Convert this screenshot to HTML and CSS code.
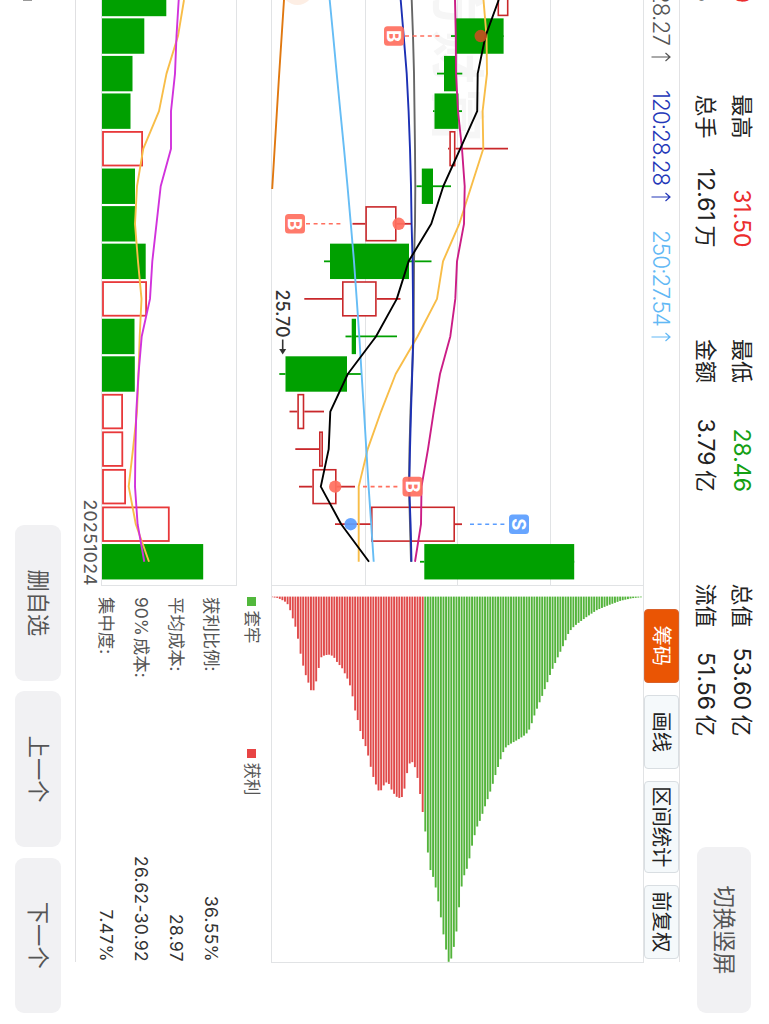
FILE: index.html
```html
<!DOCTYPE html>
<html lang="zh-CN">
<head>
<meta charset="utf-8">
<title>K线</title>
<link rel="stylesheet" href="styles.css">
</head>
<body>
<div class="device">
<main class="app">
  <header class="header">
    <dl class="quotes">
      <div class="quote"><dt></dt><dd class="up">0</dd></div>
      <div class="quote"><dt>最高</dt><dd class="up">31.50</dd></div>
      <div class="quote"><dt>最低</dt><dd class="down">28.46</dd></div>
      <div class="quote"><dt>总值</dt><dd>53.60<i>亿</i></dd></div>
      <div class="quote"><dt></dt><dd>%</dd></div>
      <div class="quote"><dt>总手</dt><dd>12.61<i>万</i></dd></div>
      <div class="quote"><dt>金额</dt><dd>3.79<i>亿</i></dd></div>
      <div class="quote"><dt>流值</dt><dd>51.56<i>亿</i></dd></div>
    </dl>
    <button class="btn btn-rotate">切换竖屏</button>
  </header>

  <nav class="toolbar">
    <div class="averages">
      <span class="avg avg-60">28.27<svg class="arrow" viewBox="0 0 10 20"><path d="M5 19.5V1M1 5.5L5 1L9 5.5"/></svg></span>
      <span class="avg avg-120">120:28.28<svg class="arrow" viewBox="0 0 10 20"><path d="M5 19.5V1M1 5.5L5 1L9 5.5"/></svg></span>
      <span class="avg avg-250">250:27.54<svg class="arrow" viewBox="0 0 10 20"><path d="M5 19.5V1M1 5.5L5 1L9 5.5"/></svg></span>
    </div>
    <div class="tabs">
      <button class="tab tab-active">筹码</button>
      <button class="tab">画线</button>
      <button class="tab tab-wide">区间统计</button>
      <button class="tab">前复权</button>
    </div>
  </nav>

  <section class="panel">
    <svg class="kline" width="586" height="568" viewBox="0 0 586 568">
      <text class="watermark" x="-26 30 88" y="207">方财富</text>
      <g id="kline" transform="matrix(0,-1,1,0,0,644)"></g>
      <g class="badge-text">
        <text x="36.1" y="256.8">B</text>
        <text x="224" y="355.8">B</text>
        <text x="486.7" y="238.3">B</text>
        <text x="524.3" y="131.8">S</text>
      </g>
      <text class="low-label" x="289.5" y="367.7" textLength="48">25.70</text>
      <text class="date-label" x="499.5" y="560.5" textLength="86">20251024</text>
    </svg>
    <aside class="chips">
      <svg class="dist" width="377" height="373" viewBox="0 0 377 373">
        <g id="dist" transform="matrix(0,-1,1,0,-586,644)"></g>
      </svg>
      <div class="legend">
        <span class="legend-item"><b class="swatch swatch-loss"></b>套牢</span>
        <span class="legend-item"><b class="swatch swatch-gain"></b>获利</span>
      </div>
      <ul class="stats">
        <li><span>获利比例:</span><em>36.55%</em></li>
        <li><span>平均成本:</span><em>28.97</em></li>
        <li><span><i>90%</i>成本:</span><em>26.62-30.92</em></li>
        <li><span>集中度:</span><em>7.47%</em></li>
      </ul>
    </aside>
  </section>

  <footer class="footer">
    <span class="edge"></span>
    <button class="btn">删自选</button>
    <button class="btn">上一个</button>
    <button class="btn">下一个</button>
  </footer>
</main>
</div>
<script src="charts.js"></script>
</body>
</html>
```
FILE: styles.css
```css
* { box-sizing: border-box; margin: 0; padding: 0; }
body {
  background: #fff;
  font-family: Inter, "Noto Sans CJK SC", sans-serif;
  color: #222;
}
.device { width: 769px; height: 1024px; overflow: hidden; }
.app {
  width: 1024px;
  height: 769px;
  display: flex;
  flex-direction: column;
  transform: translateX(769px) rotate(90deg);
  transform-origin: 0 0;
}
button { font: inherit; border: 0; flex: none; white-space: nowrap; }
i, em { font-style: normal; }

.header {
  height: 89px;
  flex: none;
  display: flex;
  justify-content: space-between;
  align-items: flex-start;
  padding-right: 11px;
}
.quotes {
  display: grid;
  grid-template-columns: 3px 153px 153px 153px;
  grid-auto-rows: 36px;
  column-gap: 91.5px;
  padding-top: 9px;
}
.quote {
  display: flex;
  justify-content: space-between;
  align-items: center;
  line-height: 36px;
  font-size: 22px;
  white-space: nowrap;
}
.quote:nth-child(4n + 1) { justify-content: flex-end; }
.quote dd { font-size: 23px; }
.quote i { font-size: 22px; margin-left: 4.5px; }
.up { color: #eb2d2d; }
.down { color: #14a014; }

.btn {
  width: 155.5px;
  height: 46px;
  border-radius: 9px;
  background: #f1f1f3;
  color: #555;
  font-size: 22.3px;
  line-height: 44px;
}
.btn-rotate { width: 166px; height: 54px; margin-top: 18px; line-height: 52px; }

.toolbar {
  width: 962px;
  height: 36px;
  flex: none;
  display: flex;
  justify-content: space-between;
  border-top: 1px solid #e2e2e4;
}
.averages { display: flex; gap: 28px; font-size: 22.5px; font-weight: 300; letter-spacing: -0.95px; line-height: 34px; }
.avg { display: flex; justify-content: space-between; align-items: center; width: 112px; white-space: nowrap; }
.avg-60 { width: 62px; justify-content: flex-end; gap: 7px; color: #555; }
.avg-120 { color: #2337b8; }
.avg-250 { color: #62b8f5; }
.arrow { width: 10px; height: 20px; fill: none; stroke: currentColor; stroke-width: 1.2; flex: none; }
.tabs { display: flex; gap: 11.5px; margin-right: 3px; }
.tab {
  width: 74.5px;
  height: 35px;
  border: 1px solid #d9dee2;
  border-radius: 4px;
  background: #f5f9fb;
  color: #222;
  font-size: 20.3px;
  line-height: 31px;
}
.tab-wide { width: 92.5px; }
.tab-active { background: #ea5504; border-color: #d9612a; color: #fff; }

.panel { width: 962px; height: 569px; flex: none; display: flex; border-bottom: 1px solid #e0e0e2; }
.kline, .dist { display: block; flex: none; }
.chips { width: 376px; }
.grid { stroke: #e1e3e5; stroke-width: 1; fill: none; }
.watermark { font: 700 54px "Noto Sans CJK SC", sans-serif; fill: #f6f6f6; }
.line { fill: none; stroke-width: 1.9; stroke-linejoin: round; }
.badge-text { font: 700 18.5px Inter, sans-serif; fill: #fff; text-anchor: middle; }
.low-label { font: 500 18px Inter, sans-serif; fill: #333; }
.date-label { font: 400 17.7px Inter, sans-serif; fill: #555; }

.legend { display: flex; height: 37px; margin-left: 10.5px; font-size: 16.5px; color: #555; line-height: 36px; padding-top: 1px; }
.legend-item { display: flex; align-items: center; width: 152px; gap: 5px; }
.swatch { width: 9px; height: 9px; flex: none; }
.swatch-loss { background: #52b83c; }
.swatch-gain { background: #e84444; }
.stats { list-style: none; margin-left: 11px; font-size: 17.4px; line-height: 35px; padding-top: 5px; }
.stats li { display: flex; justify-content: space-between; height: 35px; color: #555; white-space: nowrap; }
.stats i { margin-right: 2px; }
.stats em { color: #333; letter-spacing: 0.35px; }

.footer {
  display: flex;
  justify-content: flex-end;
  gap: 10.7px;
  padding: 14px 11px 0 0;
}
.edge { width: 1px; height: 9px; margin: 29px auto 0 0; background: #999; }
```
FILE: charts.js
```js
const NS = 'http://www.w3.org/2000/svg';

// Coordinates are (price axis, time axis); each group transform turns them upright.
function add(parent, tag, attrs) {
  const el = document.createElementNS(NS, tag);
  for (const k in attrs) el.setAttribute(k, attrs[k]);
  parent.appendChild(el);
  return el;
}
const rect = (g, x1, x2, y1, y2, attrs) =>
  add(g, 'rect', Object.assign({ x: x1, y: y1, width: x2 - x1, height: y2 - y1 }, attrs));
const seg = (g, x1, y1, x2, y2, attrs) => add(g, 'line', Object.assign({ x1, y1, x2, y2 }, attrs));

const STEP = 37.55, FIRST = -1.5, HALF = 17.7;
const at = i => FIRST + STEP * i;

const k = document.getElementById('kline');
for (const x of [271.5, 365.5, 457.5, 550.5, 643.5, 236.5]) seg(k, x, 0, x, 585.5, { class: 'grid' });
seg(k, 101.5, 0, 101.5, 585.5, { class: 'grid' });
seg(k, 271, 585.5, 644, 585.5, { class: 'grid' });
seg(k, 101, 585.5, 237, 585.5, { class: 'grid' });
add(k, 'circle', { cx: 297.5, cy: -11, r: 16, fill: '#fdeee4' });

// [up, body low, body high, wick low, wick high, volume edge]
const bars = [
  [1, 497.5, 508.5, 497.5, 508.5, 166.3, 0],
  [0, 456, 503.6, 451, 503, 144.3],
  [0, 444, 456, 437, 462.3, 132.5],
  [0, 434.5, 458.5, 433, 462, 130.5],
  [1, 449.3, 455.5, 448, 508, 143],
  [0, 421.8, 433, 416.5, 451, 135],
  [0, 365.3, 396.6, 352.5, 411, 135.7],
  [0, 330, 409, 324, 431.5, 145.7],
  [1, 342, 376.7, 304.3, 400.5, 147],
  [0, 351.7, 356, 345.5, 397, 134.5],
  [0, 285.5, 347, 279.3, 361, 134.8],
  [1, 297.3, 304.3, 289.5, 324, 123],
  [1, 319, 323, 295.3, 322, 123.2],
  [1, 312.3, 336.6, 299, 355, 126],
  [1, 371, 455, 335, 462, 169.7],
  [0, 424.3, 574.2, 420, 574, 203.2]
];
bars[6][0] = 1;
bars[6][6] = 0;
const GREEN = '#00a000', RED = '#c9282b', VRED = '#e8383a';
bars.forEach(([up, lo, hi, wl, wh, vol, volUp], i) => {
  const c = at(i), a = c - HALF, b = c + HALF;
  const tone = up ? RED : GREEN;
  seg(k, wl, c, lo, c, { stroke: tone, 'stroke-width': 1.8 });
  seg(k, hi, c, wh, c, { stroke: tone, 'stroke-width': 1.8 });
  if (up) rect(k, lo + .8, hi - .8, a + .8, b - .8, { fill: '#fff', stroke: RED, 'stroke-width': 1.6 });
  else rect(k, lo, hi, a, b, { fill: GREEN });
  if (up && volUp !== 0) rect(k, 103, vol - .9, a + .9, b - .9, { fill: '#fff', stroke: VRED, 'stroke-width': 1.8 });
  else rect(k, 102, vol, a, b, { fill: GREEN });
});

const series = (color, xs) => add(k, 'polyline', {
  class: 'line', stroke: color,
  points: xs.map((x, i) => x + ',' + (i === 0 ? 0 : at(i))).join(' ')
});
series('#f8bd48', [483.5, 486.5, 487, 482.6, 483.3, 471.3, 459.3, 443, 437, 417.5, 395.7, 381, 367.7, 358.7, 358.7, 358.7]);
series('#cb1d86', [455, 455.8, 456, 458, 462, 464.7, 464, 457, 455.3, 450.3, 440, 433.7, 428, 421.5, 421, 415]);
series('#666', [411.7, 413, 414, 414.5, 415, 415.3, 415, 414, 413.8, 413.6, 412, 410.5, 409.5, 409, 410, 411]);
series('#1c30b4', [400.7, 403.7, 406.7, 408.6, 410, 411, 411.6, 412.6, 413, 413.2, 412.2, 411, 410, 409.2, 410.6, 411.5]);
add(k, 'polyline', { class: 'line', stroke: '#e07810', points: '284,0 278.8,80 272.2,189' });
series('#66bdf5', [329.7, 333.2, 336.7, 340.3, 344, 347.5, 350.8, 354, 356.7, 359.3, 361.6, 364, 366.3, 368.6, 371.2, 373.7]);
series('#000', [498.7, 485.5, 477.7, 477.2, 460.3, 443.3, 431.3, 408.6, 396.8, 376, 347.8, 330.3, 328.7, 320.8, 341.2, 369]);
series('#f8bd48', [184, 178, 166.5, 159, 143.3, 137, 135, 138, 141.5, 139.7, 138.5, 137, 133, 128.7, 135.8, 149]);
series('#d132dc', [178.7, 176.5, 175, 171, 171, 160.7, 156.5, 152.3, 150, 141.7, 138.5, 136.3, 135.4, 135, 137.6, 144.3]);

// Trade markers: badge centre, bar index, dash span, dot, colour
const marks = [
  [394, 1, 405, 443, 480.7, '#ff6f5e'],
  [295, 6, 306, 344, 398.7, '#ff6f5e'],
  [412.5, 13, 363, 401, 335.2, '#ff6f5e'],
  [519, 14, 470, 508, 350.7, '#5a9dff']
];
marks.forEach(([x, i, d1, d2, dot, color]) => {
  const c = at(i);
  seg(k, d1, c, d2, c, { stroke: color, 'stroke-width': 1.6, 'stroke-dasharray': '4 3.6' });
  add(k, 'circle', { cx: dot, cy: c, r: 6.2, fill: i === 1 ? '#c2501e' : color, 'fill-opacity': .92 });
  rect(k, x - 10, x + 10, c - 9.8, c + 9.8, { rx: 3.5, fill: color, 'fill-opacity': .92 });
});
seg(k, 282.7, 339.5, 282.7, 350, { stroke: '#333', 'stroke-width': 1.6 });
add(k, 'path', { d: 'M279.2 349L282.7 354.5L286.2 349Z', fill: '#333' });

const profile = [
  [272, 597.2], [278, 598], [281, 599.5], [284, 601], [287, 603], [289.5, 608], [292, 616], [295, 625], [297.7, 637],
  [300, 651], [303, 665], [306, 676], [308.5, 683], [311, 690.3], [314, 690.3], [316.5, 680], [319, 666.7],
  [321.8, 655.5], [325, 655.7], [328, 654.3], [332, 655.7], [334.5, 658], [337, 662], [342, 668], [347, 677.7],
  [350, 685.5], [352.7, 697], [355, 710], [357.5, 719], [360, 730], [363, 739.3], [365.5, 746], [368, 755],
  [370.7, 766.7], [373, 776], [376, 784.7], [378.5, 790.5], [381, 790.5], [383.5, 785.7], [386, 782.3], [389, 784],
  [391, 788.7], [394, 793.7], [396.5, 796.7], [399, 798], [402, 797], [404, 791.7], [406.7, 775], [409, 764],
  [412, 761.7], [414.5, 765.7], [417, 775], [419.5, 790], [422, 807], [424.7, 826.7], [427.3, 848], [430, 869],
  [432.3, 874], [435, 884], [437.7, 898], [440.2, 912.7], [442.7, 930], [445.5, 946], [448, 961.7], [450.5, 962],
  [453, 950.7], [455.7, 938.7], [458.3, 914], [461, 890], [463.5, 876.7], [466, 872], [469, 860.7], [471.3, 848.7],
  [474, 837.7], [476.5, 828], [479, 823], [481.5, 816.7], [484, 809], [486.7, 802], [489, 795], [492, 786.7],
  [494.5, 778], [497, 770], [499.5, 762.7], [502, 755], [504.5, 749], [507, 746], [512, 743], [519, 739], [525, 735],
  [528, 732], [531, 726], [533, 719], [535.5, 712.7], [538, 706], [541, 699], [546, 686], [550.7, 673], [557, 659],
  [564, 644], [569, 632], [574, 626.5], [577, 624], [587, 616.7], [597, 610], [609, 605], [620.7, 600.7],
  [632, 598.2], [642, 597.2]
];
function depth(x) {
  for (let i = 1; i < profile.length; i++) {
    const [x0, y0] = profile[i - 1], [x1, y1] = profile[i];
    if (x <= x1) return y0 + (y1 - y0) * (x - x0) / (x1 - x0);
  }
  return 597;
}
const d = document.getElementById('dist');
const PITCH = 2.598;
for (let n = 0; n < 143; n++) {
  const x = 272 + n * PITCH;
  rect(d, x - .95, x + .95, 596.6, depth(x), { fill: x < 423.2 ? '#e04a4a' : '#54b43c' });
}
seg(d, 271.5, 586, 271.5, 963, { class: 'grid' });
seg(d, 643.5, 586, 643.5, 963, { class: 'grid' });
seg(d, 271, 962.5, 644, 962.5, { class: 'grid' });
```
